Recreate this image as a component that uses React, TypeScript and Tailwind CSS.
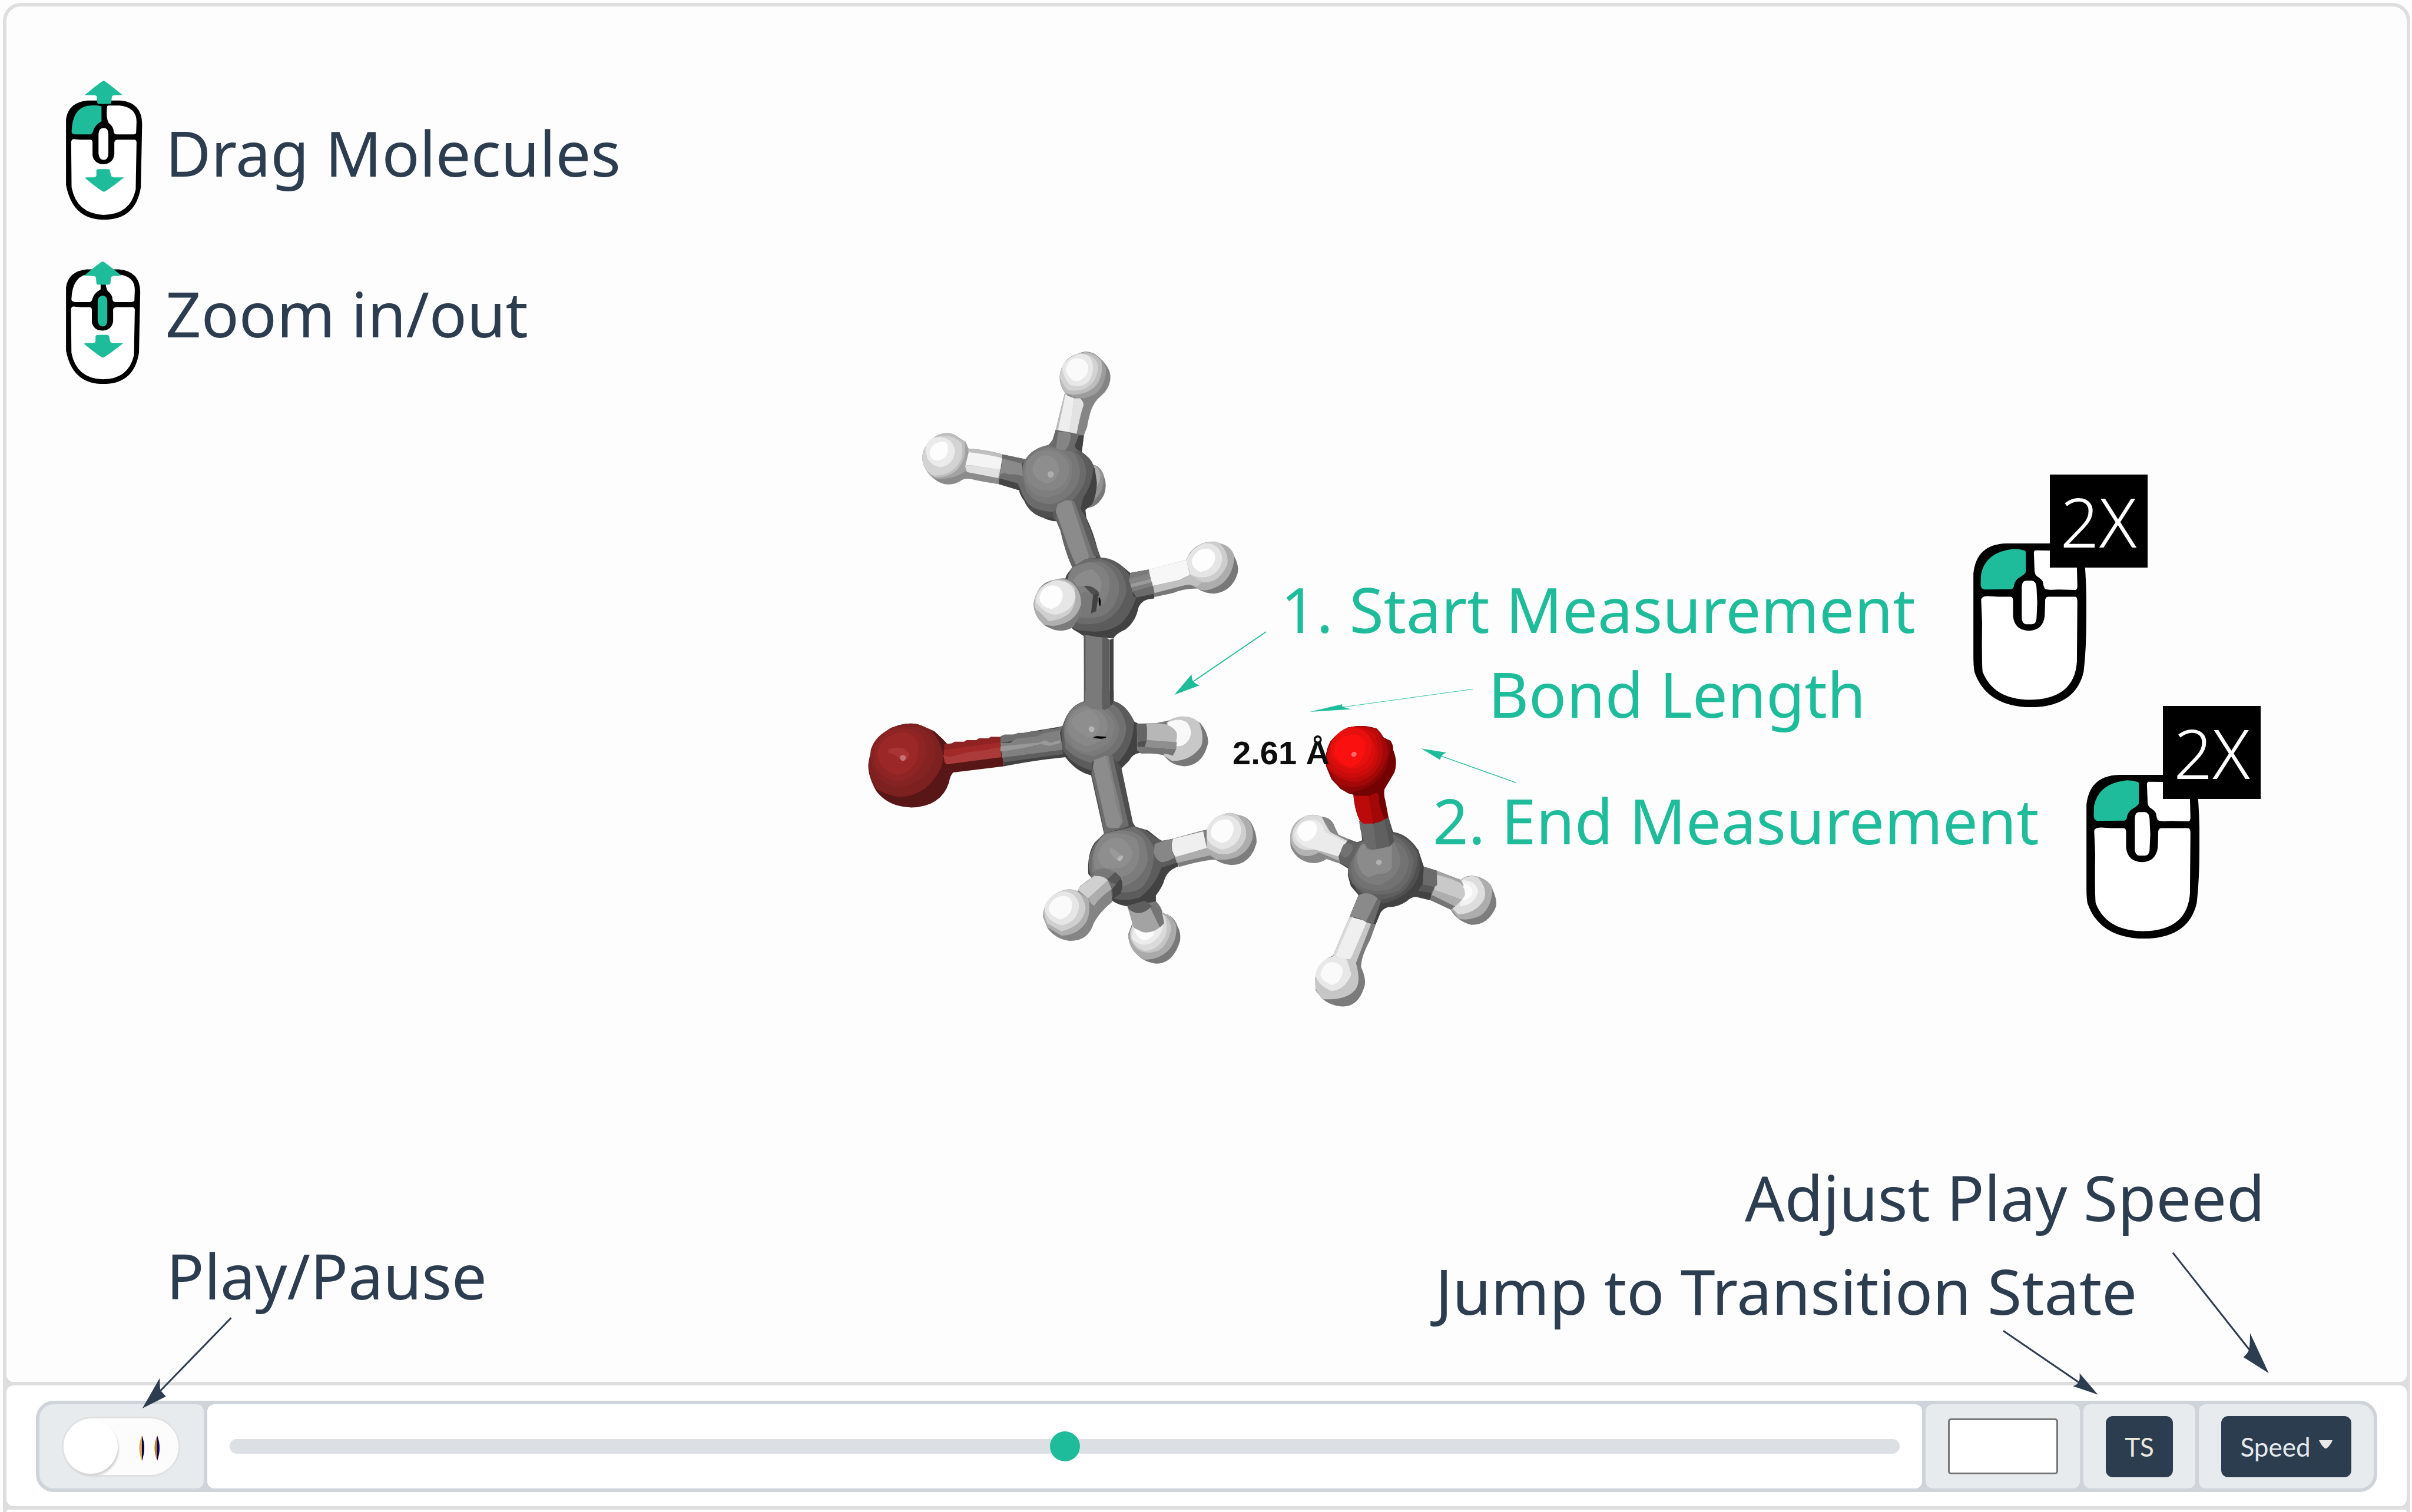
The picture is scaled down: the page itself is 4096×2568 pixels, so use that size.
import React, { useState } from "react";

type Shape = [fill: string, d: string];

const GREEN = "#1fbc9c";
const NAVY = "#2d3d50";

/* Butyl fragment, upper half: CH3 and CH2 groups */
const upperChain: Shape[] = [
  ["#787878", "M950,572 Q985,570 1000,620 Q1015,665 1000,705 Q975,760 930,762 Z"],
  ["#929292", "M950,572 Q985,572 998,615 Q1005,690 958,730 Z"],
  ["#adadad", "M955,572 Q980,580 987,615 Q985,650 972,670Z"],
  ["#424242", "M697,548 Q725,500 785,485 L800,463 L812,418 L922,443 L914,515 Q950,545 965,590 L973,650 Q972,700 955,745 L928,770 L932,805 Q960,870 975,940 L988,980 L877,1022 Q850,960 835,870 L815,820 Q790,820 760,803 Q710,785 690,732 Q672,705 669,683 L590,657 L604,526 Z"],
  ["#858585", "M900,84 Q930,65 965,85 Q990,105 1005,128 Q1030,160 1025,200 Q1020,240 990,268 Q960,295 948,340 Q938,380 935,405 L922,443 L812,418 L830,335 L848,255 Q825,220 828,180 Q835,110 900,84Z"],
  ["#9c9c9c", "M960,85 Q990,105 1008,145 Q1010,220 965,262 Q930,280 907,280 L880,275 L850,252 Q828,220 828,180 Q838,100 900,84 Q930,68 960,85Z"],
  ["#bdbdbd", "M900,84 Q940,66 972,95 L990,112 Q1000,170 975,215 Q945,262 880,264 Q855,262 848,253 Q825,220 829,175 Q838,105 900,84Z"],
  ["#d2d2d2", "M903,84 Q930,82 955,98 Q985,125 975,165 Q965,215 925,238 Q890,250 861,244 Q830,205 829,180 Q838,105 903,84Z"],
  ["#e8e8e8", "M903,84 Q925,82 945,98 Q965,130 955,170 Q945,215 915,223 Q890,232 865,218 Q838,180 838,140 Q850,105 903,84Z"],
  ["#fafafa", "M895,103 Q930,105 939,140 Q942,175 910,200 Q885,212 868,190 Q850,165 852,150 Q862,105 895,103Z"],
  ["#bdbdbd", "M848,255 L858,262 L820,425 L812,418Z"],
  ["#eeeeee", "M850,264 L885,280 L866,430 L820,425Z"],
  ["#e2e2e2", "M885,280 L907,280 Q922,295 921,310 Q908,350 893,440 L864,430Z"],
  ["#8b8b8b", "M345,445 Q390,420 425,445 L460,472 L471,500 Q540,505 604,526 L590,657 Q520,645 480,634 Q455,630 440,643 Q390,675 345,640 Q295,600 291,545 Q290,490 345,445Z"],
  ["#a3a3a3", "M450,470 L460,472 L471,500 L460,600 Q400,645 335,630 Z"],
  ["#bebebe", "M345,445 Q390,420 425,445 L455,470 Q468,540 430,590 Q395,630 340,627 Q295,600 291,540 Q295,480 345,445Z"],
  ["#d3d3d3", "M345,450 Q410,430 445,480 Q455,540 425,580 Q385,625 328,618 Q293,590 291,540 Q300,475 345,450Z"],
  ["#ebebeb", "M350,450 Q410,450 419,510 Q415,570 365,582 Q330,580 312,545 Q300,510 308,480 Q320,455 350,450Z"],
  ["#fdfdfd", "M370,470 Q395,470 391,510 Q390,545 350,553 Q322,550 320,520 Q325,475 370,470Z"],
  ["#bfbfbf", "M471,500 Q530,505 604,526 L602,542 Q530,525 470,516Z"],
  ["#f4f4f4", "M472,516 Q540,525 603,542 L596,592 Q540,588 500,576 L460,574Z"],
  ["#e0e0e0", "M458,574 L500,576 Q550,590 596,590 L588,630 L465,604 Z"],
  ["#6b6b6b", "M604,526 L698,548 L680,567 L603,543Z"],
  ["#5c5c5c", "M785,485 L800,463 L870,440 L888,485 L907,512 Q950,540 960,575 Q955,660 920,715 L910,765 L815,820 L800,805 Q755,790 730,770 Q690,732 680,690 L660,652 L685,566 L697,548 Q725,500 785,485Z"],
  ["#4e4e4e", "M690,732 Q725,780 800,778 L805,805 L760,803 Q710,785 690,732Z"],
  ["#6b6b6b", "M785,485 Q860,480 905,530 Q940,570 927,640 Q905,715 840,760 L800,778 Q740,775 705,745 Q680,710 668,660 L685,566 Q710,500 785,485Z"],
  ["#777777", "M785,485 Q860,490 890,530 Q920,600 895,660 Q865,725 800,745 Q730,745 697,690 L680,620 L686,566 Q715,500 785,485Z"],
  ["#7e7e7e", "M775,495 Q850,500 875,560 Q885,640 840,690 Q790,730 735,705 Q690,670 684,610 Q700,520 775,495Z"],
  ["#858585", "M785,507 Q860,520 866,590 Q860,665 800,685 Q740,690 705,650 Q690,600 697,560 Q720,510 785,507Z"],
  ["#8e8e8e", "M772,530 Q815,530 825,590 Q820,650 775,654 Q725,635 721,590 Q730,535 772,530Z"],
  ["#adadad", "M780,614 Q782,600 793,600 Q805,601 805,614 Q803,628 792,629 Q781,627 780,614Z"],
  ["#8a8a8a", "M603,543 L680,566 L683,622 L596,616Z"],
  ["#6e6e6e", "M596,614 Q610,602 630,615 Q650,610 683,622 Q700,660 665,655 L590,630Z"],
  ["#464646", "M590,632 L660,652 L668,683 L590,657Z"],
  ["#6a6a6a", "M812,418 L870,430 L922,443 L905,512 L850,510 L785,487 L800,463Z"],
  ["#858585", "M822,427 L868,430 Q876,470 850,508 Q830,510 813,498Z"],
  ["#424242", "M902,443 L922,443 L914,515 Q885,505 888,485Z"],
  ["#666666", "M815,820 L830,860 Q850,960 877,1022 L892,1010 Q860,930 835,830 L812,770Z"],
  ["#8b8b8b", "M820,745 L850,728 L875,730 L942,965 Q945,990 925,1000 L892,1014 Q865,950 845,880 L812,775Z"],
  ["#767676", "M872,728 L888,735 L965,965 L975,1000 L930,1000 Q945,985 940,965Z"],
  ["#5c5c5c", "M885,732 Q905,730 910,765 L928,800 L975,940 L985,982 L960,970Z"],
  ["#424242", "M877,1022 L930,985 L995,980 L1045,998 L1075,1020 L1103,1047 L1176,1032 L1198,1152 L1195,1160 Q1150,1160 1135,1200 Q1125,1260 1085,1295 Q1045,1315 1038,1335 L922,1325 L905,1312 L880,1295 L855,1260 L840,1100 L855,1055Z"],
  ["#5c5c5c", "M877,1022 L930,985 L1000,980 Q1040,985 1075,1020 L1103,1060 L1115,1150 L1127,1155 Q1100,1240 1060,1275 Q1010,1310 950,1304 L905,1300 L880,1290 Z"],
  ["#6b6b6b", "M860,1055 L880,1020 L930,985 Q1000,975 1050,1020 Q1090,1070 1088,1130 Q1070,1220 1000,1260 Q950,1278 900,1270 L850,1200Z"],
  ["#777777", "M870,1030 Q940,985 995,1000 Q1060,1040 1060,1120 Q1045,1220 980,1240 Q930,1250 900,1240 L850,1150Z"],
  ["#808080", "M880,1020 L940,1000 Q1020,1010 1023,1090 Q1020,1180 970,1210 L900,1200 L850,1100Z"],
  ["#8b8b8b", "M880,1080 Q910,1035 955,1030 Q985,1060 992,1090 Q990,1150 960,1150 L930,1105 L895,1105Z"],
  ["#787878", "M912,1140 Q925,1120 945,1135 L958,1147 L952,1220 L915,1245 L905,1200Z"],
  ["#4e4e4e", "M922,1105 Q950,1095 980,1130 L980,1150 L958,1145Z"],
  ["#424242", "M958,1145 L980,1135 L970,1215 L950,1225Z"],
  ["#000000", "M980,1155 Q986,1152 988,1172 Q988,1192 985,1194 Q978,1185 980,1155Z"],
  ["#7b7b7b", "M855,1072 L890,1095 L915,1140 L912,1230 L880,1285 Q830,1320 770,1278 Q725,1235 726,1180 Q740,1090 805,1078 Q830,1068 855,1072Z"],
  ["#b0b0b0", "M805,1078 Q840,1065 870,1085 Q912,1120 911,1185 Q890,1270 800,1280 L768,1275 Q722,1235 727,1175 Q745,1100 805,1078Z"],
  ["#cfcfcf", "M805,1080 Q850,1070 885,1110 Q900,1180 865,1225 Q830,1255 785,1259 L745,1215 Q722,1200 733,1150 Q745,1100 805,1080Z"],
  ["#e6e6e6", "M810,1080 Q880,1080 889,1150 Q880,1215 815,1230 Q775,1235 735,1175 Q735,1110 810,1080"],
  ["#fdfdfd", "M795,1102 Q835,1100 840,1145 Q835,1195 795,1205 Q750,1195 749,1155 Q755,1110 795,1102Z"],
  ["#787878", "M1400,912 Q1430,905 1455,918 Q1495,930 1510,975 Q1530,1020 1522,1050 Q1500,1130 1430,1138 Q1390,1135 1365,1115 Q1310,1115 1270,1135 L1198,1153 L1176,1032 L1322,990 Q1340,930 1400,912Z"],
  ["#adadad", "M1395,915 Q1430,903 1455,918 Q1500,930 1510,975 Q1505,1060 1455,1100 Q1400,1135 1370,1118 L1340,1100 L1320,1100 L1320,990 Z"],
  ["#c0c0c0", "M1192,1104 L1295,1078 L1340,1055 L1385,1085 L1365,1105 L1330,1097 L1198,1135Z"],
  ["#cdcdcd", "M1395,915 Q1440,900 1455,920 Q1490,960 1482,1010 Q1450,1095 1385,1088 L1340,1058 L1322,990 Q1345,930 1395,915Z"],
  ["#e5e5e5", "M1395,917 Q1455,915 1463,985 Q1455,1050 1400,1065 Q1370,1070 1338,1054 L1322,990 Q1345,930 1395,917Z"],
  ["#fdfdfd", "M1395,940 Q1435,940 1435,985 Q1425,1035 1375,1042 Q1345,1025 1343,995 Q1355,945 1395,940Z"],
  ["#f7f7f7", "M1174,1032 L1322,990 L1336,1055 L1295,1078 L1190,1104Z"],
  ["#7a7a7a", "M1103,1047 L1176,1032 L1178,1055 L1100,1078Z"],
  ["#858585", "M1098,1075 L1178,1050 L1183,1072 L1103,1095Z"],
  ["#9b9b9b", "M1103,1095 L1183,1072 L1188,1090 L1108,1112Z"],
  ["#7d7d7d", "M1108,1110 L1188,1088 L1192,1106 L1112,1130Z"],
  ["#6b6b6b", "M1112,1128 L1192,1104 L1197,1138 L1127,1155Z"],
  ["#7a7a7a", "M922,1318 L1000,1333 L1000,1655 L922,1655Z"],
  ["#5e5e5e", "M922,1318 L929,1320 L929,1650 L924,1650Z"],
  ["#5e5e5e", "M994,1333 Q1022,1330 1023,1345 L1023,1650 L994,1650Z"],
  ["#424242", "M1023,1340 L1038,1335 L1038,1630 L1023,1645Z"],
];

/* Butyl fragment, lower half: bromine, reacting carbon and CH3 */
const lowerChain: Shape[] = [
  ["#581616", "M160,275 L190,262 Q240,245 275,265 L320,290 L350,325 L368,350 L470,335 L565,317 L578,455 L390,484 Q378,500 375,530 Q345,645 235,648 Q150,645 105,570 Q75,500 76,450 Q85,330 160,275Z"],
  ["#7c2020", "M160,275 L190,262 Q240,245 275,265 L310,285 Q370,380 345,460 Q300,590 195,600 Q140,590 105,560 Q75,500 77,440 Q90,330 160,275Z"],
  ["#852222", "M165,275 Q260,250 300,300 Q345,380 310,455 Q270,550 175,552 Q120,540 95,470 Q80,440 85,380 Q100,310 165,275Z"],
  ["#8e2424", "M150,290 Q240,255 280,320 Q305,400 265,465 Q235,520 180,525 Q120,510 100,450 Q80,350 150,290Z"],
  ["#9b2727", "M200,295 Q255,295 262,370 Q260,480 185,494 Q120,480 108,400 Q120,310 200,295"],
  ["#a93434", "M150,375 Q175,362 210,372 L228,395 Q230,425 200,430 L180,405 L150,390Z"],
  ["#c47272", "M193,414 Q196,400 207,402 Q217,408 215,418 Q210,432 203,430 Q194,426 193,414Z"],
  ["#8f2323", "M357,350 L385,348 L395,340 L430,340 L440,332 L475,332 L485,324 L520,324 L530,316 L565,317 L565,345 L357,378Z"],
  ["#a32828", "M355,378 L565,342 L568,412 L357,440Z"],
  ["#ab3b3b", "M352,402 Q370,415 395,405 Q450,385 520,378 Q550,360 565,370 L568,412 L365,446Z"],
  ["#424242", "M565,317 L790,268 L806,412 Q700,425 578,455Z"],
  ["#5e5e5e", "M572,415 L792,378 L798,398 L576,436Z"],
  ["#6e6e6e", "M565,315 L580,306 L615,306 L630,298 L665,298 L680,290 L715,290 L730,280 L765,280 L800,262 L800,300 L565,345Z"],
  ["#808080", "M565,345 L600,345 L625,325 L700,315 L725,300 L785,285 L795,378 L571,415Z"],
  ["#999999", "M565,362 Q640,350 705,345 L730,333 L750,345 L785,332 L788,345 L745,360 L715,350 Q640,375 565,385Z"],
  ["#424242", "M870,152 L985,150 Q1030,165 1060,245 L1075,255 L1110,258 L1105,390 L1080,392 Q1055,395 1040,430 L1012,465 L1020,520 L900,497 Q845,480 805,412 L785,300 L800,250 Q820,175 870,152Z"],
  ["#5c5c5c", "M870,152 L985,150 Q1030,165 1058,245 Q1060,350 1005,430 L900,475 Q850,455 820,420 L795,380 L790,290 Q810,175 870,152Z"],
  ["#717171", "M870,152 L980,165 Q1020,190 1030,270 Q1030,350 975,405 L905,440 Q840,420 805,370 L797,270 Q820,175 870,152Z"],
  ["#7a7a7a", "M870,154 L960,185 Q1000,220 1005,290 Q990,380 910,408 Q840,400 803,330 Q790,190 870,154"],
  ["#808080", "M870,165 Q970,180 988,260 Q985,370 880,390 Q820,370 806,300 Q800,200 870,165"],
  ["#888888", "M880,175 Q955,190 962,265 Q955,350 880,360 Q815,330 812,270 Q820,190 880,175"],
  ["#8e8e8e", "M895,188 Q930,210 933,260 Q925,320 890,322 Q840,290 826,255 Q835,205 895,188"],
  ["#b5b5b5", "M891,280 Q893,267 902,267 Q913,269 913,281 Q911,294 902,296 Q892,293 891,280Z"],
  ["#000000", "M908,322 Q915,311 930,314 L957,316 Q955,325 935,326Z"],
  ["#7a7a7a", "M879,100 L941,100 L941,188 L900,186 L879,160Z"],
  ["#5e5e5e", "M941,100 L970,100 L970,178 L950,190 L941,185Z"],
  ["#424242", "M970,100 L984,100 L984,152 L972,176Z"],
  ["#787878", "M1190,240 Q1240,205 1285,238 L1303,250 Q1335,300 1333,345 Q1315,450 1245,455 Q1205,450 1185,425 L1168,403 Q1130,392 1085,395 L1070,380 L1070,255 L1140,253 Z"],
  ["#c8c8c8", "M1192,240 Q1240,205 1285,235 L1300,250 Q1320,310 1308,360 Q1270,430 1200,430 L1170,405 L1180,250Z"],
  ["#f8f8f8", "M1185,248 Q1230,225 1255,250 Q1280,290 1262,330 Q1245,365 1215,360 L1180,300Z"],
  ["#b7b7b7", "M1105,256 Q1160,248 1190,265 Q1220,285 1218,310 L1215,345 L1108,332Z"],
  ["#8e8e8e", "M1108,332 L1217,342 L1215,375 L1098,365Z"],
  ["#757575", "M1098,365 L1215,375 L1203,405 Q1170,390 1085,395Z"],
  ["#656565", "M1068,255 L1105,258 Q1112,310 1100,340 L1072,335Z"],
  ["#505050", "M1072,340 L1105,335 L1098,365 L1072,362Z"],
  ["#4e4e4e", "M985,420 L1012,460 L1055,720 L1065,738 L948,770 L900,497 L905,430 Z"],
  ["#6c6c6c", "M980,405 L1040,735 L950,770 Q930,640 902,490 L910,430Z"],
  ["#828282", "M950,405 L965,405 Q985,540 1000,600 L1018,715 L1005,742 L965,745 L935,600 L910,460Z"],
  ["#8c8c8c", "M955,405 L912,425 L908,460 L957,735 Q965,748 1005,742 L1012,715 L990,620 L980,540Z"],
  ["#424242", "M948,770 L1055,735 L1110,755 L1160,805 L1203,795 L1223,925 Q1185,940 1172,985 Q1165,1020 1140,1060 L1140,1088 L1110,1110 L1030,1110 Q1000,1105 978,1085 L890,960 Q885,860 915,810Z"],
  ["#5c5c5c", "M948,770 L1060,735 L1100,755 L1140,790 L1165,805 L1203,795 L1222,905 L1160,930 Q1140,1010 1080,1070 Q1030,1090 985,1075 L900,960 Q885,870 948,770"],
  ["#6e6e6e", "M948,770 L1060,738 Q1120,780 1135,850 Q1130,980 1080,1030 Q1050,1050 1010,1045 L900,975 Q870,860 948,770Z"],
  ["#7c7c7c", "M960,768 Q1040,735 1090,790 Q1110,830 1110,900 Q1090,990 1015,1020 L905,950 Q895,820 960,768Z"],
  ["#868686", "M950,775 Q1030,755 1070,800 Q1085,850 1075,900 Q1060,960 1010,975 L960,930 L915,940 Q895,840 950,775"],
  ["#8e8e8e", "M965,800 Q1010,770 1035,820 L1053,850 Q1055,910 1010,930 L960,935 Q925,920 926,870 Q935,820 965,800Z"],
  ["#999999", "M968,840 Q980,830 1010,870 L1018,885 L1005,900 Q970,880 968,840Z"],
  ["#b5b5b5", "M997,888 Q1000,874 1018,873 Q1020,890 1007,899 Q997,898 997,888Z"],
  ["#777777", "M922,940 Q960,930 990,955 L1012,980 L965,990 L905,968Z"],
  ["#848484", "M912,968 L975,1030 L978,1090 Q930,1140 910,1190 Q890,1275 820,1273 Q770,1265 740,1215 L722,1160 Q725,1070 790,1040 Q815,1025 850,1040 L860,1015Z"],
  ["#afafaf", "M790,1040 Q820,1022 850,1040 L890,1075 Q900,1130 885,1180 Q850,1250 790,1248 L740,1210 L723,1160 Q727,1070 790,1040"],
  ["#cfcfcf", "M790,1040 Q825,1025 850,1042 Q875,1070 880,1120 Q870,1205 790,1228 L738,1190 Q722,1150 730,1110 Q745,1060 790,1040"],
  ["#e6e6e6", "M795,1040 Q850,1045 856,1110 Q850,1185 790,1201 Q735,1180 727,1120 Q740,1060 795,1040"],
  ["#fafafa", "M800,1062 Q832,1065 830,1110 Q825,1160 785,1172 Q745,1155 743,1120 Q755,1065 800,1062"],
  ["#d0d0d0", "M912,968 Q950,968 962,990 L890,1075 L852,1035 Q855,1015 885,995Z"],
  ["#adadad", "M962,990 L977,1030 Q930,1070 912,1108 Q895,1100 890,1072Z"],
  ["#575757", "M990,950 L1010,975 L1005,1010 L975,1000 L960,985Z"],
  ["#454545", "M1010,980 Q1022,1010 1010,1050 L983,1075 L978,1030Z"],
  ["#7d7d7d", "M1390,682 Q1410,665 1440,682 Q1480,690 1495,725 Q1515,775 1512,815 Q1490,915 1420,918 Q1380,912 1360,892 Q1310,895 1225,927 L1200,795 L1315,755 L1330,750 Q1350,690 1390,682Z"],
  ["#adadad", "M1390,682 Q1410,665 1440,682 Q1475,690 1490,720 Q1510,780 1485,830 Q1450,900 1365,892 L1340,872 L1218,908 L1210,880 L1328,838Z"],
  ["#cfcfcf", "M1390,680 Q1415,665 1440,685 Q1480,730 1473,790 Q1445,880 1370,865 L1328,838 L1328,750 Q1350,690 1390,680"],
  ["#e6e6e6", "M1390,684 Q1450,685 1456,755 Q1450,830 1385,845 Q1340,830 1328,790 L1328,750 Q1350,690 1390,684"],
  ["#fcfcfc", "M1400,703 Q1430,710 1427,755 Q1420,805 1385,815 Q1345,800 1342,765 Q1350,705 1400,703"],
  ["#efefef", "M1203,795 L1315,760 L1328,838 L1212,880Q1190,840 1203,795"],
  ["#878787", "M1135,820 Q1170,800 1203,795 Q1190,840 1210,882 Q1180,905 1160,905 Q1135,890 1133,860Z"],
  ["#797979", "M1040,1110 L1140,1088 Q1160,1110 1165,1145 Q1205,1150 1220,1205 Q1232,1230 1230,1270 Q1205,1380 1140,1380 Q1085,1370 1060,1320 Q1035,1280 1038,1240 L1053,1190Z"],
  ["#aaaaaa", "M1165,1142 Q1200,1150 1215,1200 Q1220,1280 1180,1325 Q1145,1365 1095,1360 Q1040,1320 1038,1250 L1055,1190Z"],
  ["#c4c4c4", "M1165,1145 Q1195,1170 1197,1220 Q1180,1300 1150,1318 Q1100,1345 1065,1305 Q1040,1270 1045,1225 L1060,1190Z"],
  ["#dadada", "M1170,1150 Q1188,1200 1175,1250 Q1150,1315 1100,1320 Q1050,1300 1046,1240 L1055,1190"],
  ["#ececec", "M1058,1210 L1165,1200 Q1165,1250 1120,1285 Q1080,1305 1050,1260Z"],
  ["#fcfcfc", "M1060,1215 L1135,1230 Q1130,1260 1095,1272 Q1065,1255 1060,1215Z"],
  ["#a3a3a3", "M1035,1115 L1120,1115 L1158,1205 Q1130,1240 1090,1232 L1058,1212Z"],
  ["#757575", "M1118,1115 L1143,1090 Q1165,1130 1170,1190 L1155,1210Z"],
  ["#5e5e5e", "M1033,1108 L1100,1085 L1125,1110 Q1100,1145 1070,1143 Q1040,1135 1033,1108Z"],
];

/* Methoxide */
const methoxide: Shape[] = [
  ["#888888", "M570,790 Q600,780 630,793 Q670,795 682,830 L697,860 L737,876 L705,968 L650,950 Q620,970 580,963 Q530,950 510,905 Q500,830 570,790"],
  ["#b4b4b4", "M570,790 Q610,782 632,795 Q650,830 665,850 L737,885 L697,955 L620,925 Q575,950 540,930 Q505,900 508,860 Q515,810 570,790"],
  ["#dcdcdc", "M570,790 Q610,782 632,795 Q650,830 665,850 L735,885 L700,935 L600,915 Q540,925 518,880 Q505,830 570,790"],
  ["#ebebeb", "M585,805 Q630,800 645,850 L733,890 L698,941 L610,915 Q535,905 525,860 Q540,810 585,805"],
  ["#fdfdfd", "M580,808 Q615,810 613,840 Q605,882 565,885 Q535,870 536,845 Q545,810 580,808"],
  ["#424242", "M780,808 L892,795 L910,850 Q950,855 980,890 L1008,915 L1030,978 L1080,992 L1057,1103 L1000,1090 Q980,1090 965,1105 Q930,1128 890,1128 Q865,1135 858,1155 L842,1192 L740,1163 L775,1083 L745,1050 L733,1010 L735,985 L705,968 L697,940 L737,876 L770,888 L790,885Z"],
  ["#505050", "M910,850 Q960,855 1000,905 Q1025,950 1010,1010 Q980,1090 870,1115 L800,1090 L775,1083 L735,1000 L735,900 L790,880Z"],
  ["#5e5e5e", "M910,855 Q970,870 1005,930 Q1010,1000 960,1060 Q920,1095 860,1100 L780,1075 L735,1015 L740,920 L790,885Z"],
  ["#696969", "M910,860 Q970,890 990,950 Q990,1020 935,1065 Q880,1090 800,1075 L750,1040 L735,1000 L745,920 L790,885Z"],
  ["#727272", "M910,880 Q965,900 972,960 Q965,1030 900,1060 Q840,1080 780,1050 Q740,1020 747,960 L790,885"],
  ["#7c7c7c", "M912,885 Q940,930 938,960 Q930,1020 860,1045 Q800,1050 765,1000 Q740,950 790,895"],
  ["#8b8b8b", "M790,895 L905,895 L905,980 Q895,1005 850,1005 L815,1018 Q770,1000 769,940 Q775,905 790,895"],
  ["#b0b0b0", "M843,963 Q845,952 855,952 Q867,954 866,962 Q864,972 855,972 Q844,971 843,963Z"],
  ["#626262", "M737,876 L770,888 L790,885 L770,905 L735,980 L705,965 L697,940 Q715,900 737,876"],
  ["#727272", "M718,895 Q750,885 755,905 Q745,940 720,945 Q692,935 718,895"],
  ["#6a6a6a", "M777,808 L834,819 L845,914 L825,916 L808,910 Q785,870 777,808"],
  ["#606060", "M833,819 L858,812 L875,800 L912,885 L898,903 L845,914Z"],
  ["#555555", "M875,800 L892,795 L914,885 L898,903Z"],
  ["#7d7d7d", "M1080,993 L1175,1027 Q1195,1005 1240,1015 Q1290,1030 1300,1065 Q1320,1110 1310,1130 Q1280,1195 1215,1193 Q1160,1180 1135,1137 L1055,1100Z"],
  ["#adadad", "M1185,1020 Q1225,1005 1245,1018 Q1290,1030 1298,1062 Q1295,1130 1250,1160 Q1200,1180 1165,1170 L1135,1135Z"],
  ["#dddddd", "M1185,1020 Q1225,1005 1245,1022 Q1280,1060 1265,1100 Q1235,1150 1165,1155 L1140,1130 L1175,1030"],
  ["#f2f2f2", "M1185,1028 Q1235,1030 1242,1070 Q1230,1120 1170,1125 L1175,1030"],
  ["#fdfdfd", "M1183,1040 Q1220,1045 1220,1075 Q1210,1100 1180,1103Z"],
  ["#a3a3a3", "M1080,993 L1175,1027 L1187,1050 L1082,1010Z"],
  ["#c9c9c9", "M1082,1008 Q1150,1025 1175,1040 Q1195,1065 1190,1085 L1180,1100 L1070,1065 Z"],
  ["#aeaeae", "M1070,1063 L1180,1100 L1152,1125 L1060,1085Z"],
  ["#757575", "M1062,1083 L1152,1125 L1135,1137 L1057,1103Z"],
  ["#6b6b6b", "M1030,978 L1080,993 L1082,1045 L1072,1053 L1025,1045Z"],
  ["#575757", "M1022,1045 L1072,1053 L1060,1075 L1008,1068Z"],
  ["#7b7b7b", "M740,1163 L842,1192 L820,1250 Q785,1310 785,1350 Q810,1400 795,1430 Q770,1500 705,1495 Q660,1490 632,1465 L607,1435 L607,1390 Q615,1330 675,1307 Z"],
  ["#c6c6c6", "M825,1187 L765,1335 Q785,1400 765,1430 Q730,1475 632,1468 L607,1430 L610,1380 L680,1310 L800,1180Z"],
  ["#d9d9d9", "M740,1163 L752,1165 L687,1310 L675,1307Z"],
  ["#efefef", "M750,1165 L808,1180 L745,1318 Q720,1325 685,1308Z"],
  ["#e8e8e8", "M680,1308 L730,1322 L747,1377 Q720,1435 670,1438 Q620,1420 606,1380 Q615,1325 680,1308Z"],
  ["#fafafa", "M670,1331 Q715,1335 713,1370 Q700,1412 670,1416 Q630,1400 626,1378 Q635,1335 670,1331Z"],
  ["#8a8a8a", "M790,1078 Q820,1070 850,1095 L805,1184 Q780,1165 740,1163 L775,1085Z"],
  ["#6a6a6a", "M850,1095 L863,1105 L832,1192 L803,1183Z"],
  ["#730303", "M735,463 Q790,450 845,467 L872,500 L900,512 Q912,530 910,545 Q930,590 915,630 L877,690 Q872,710 880,735 L892,795 L858,812 L780,808 Q760,770 755,712 L735,707 L705,690 L670,655 L650,610 Q640,560 665,515 Q700,475 735,463Z"],
  ["#8a0606", "M735,463 Q790,450 845,467 L872,500 L895,512 Q905,560 880,620 Q840,690 740,705 L705,690 L665,645 L648,605 Q640,560 665,515 Q700,475 735,463Z"],
  ["#a30808", "M735,463 Q800,450 850,470 Q890,510 890,560 Q870,640 800,675 Q740,695 690,670 L650,605 Q645,500 735,463"],
  ["#bb0a0a", "M735,463 Q800,450 850,475 Q880,530 862,590 Q835,650 770,665 Q700,665 660,620 L650,600 Q645,500 735,463"],
  ["#cc0b0b", "M735,463 Q800,455 840,490 Q860,550 845,595 Q810,650 740,650 Q680,640 652,600 Q645,500 735,463"],
  ["#da0d0d", "M735,463 Q830,470 842,550 Q835,620 760,633 Q700,635 662,585 Q650,500 735,463"],
  ["#e80f0f", "M735,463 Q805,460 825,510 Q835,580 780,610 Q720,630 668,570 Q655,495 735,463"],
  ["#fb1010", "M750,489 Q800,490 803,530 Q800,590 750,609 Q700,605 679,560 Q675,500 750,489"],
  ["#ff6b6b", "M747,564 Q748,553 760,553 Q769,555 767,563 Q765,571 756,571 Q747,570 747,564Z"],
  ["#bb0a0a", "M755,715 L815,716 L834,818 L795,819 L780,808 Q760,770 755,715"],
  ["#a30808", "M815,716 L845,704 Q858,710 855,740 Q865,780 878,802 L858,812 L833,818Z"],
];

/* Call-out arrows that belong to the measurement labels */
const measureHeads: Shape[] = [
  [GREEN, "M56,342 L123,267 Q125,290 130,293 Q140,303 155,307Z"],
  [GREEN, "M584,405 L712,377 Q709,381 711,384 Q725,394 755,395Z"],
  [GREEN, "M1020,541 L1119,556 Q1098,562 1093,583Z"],
];

const paint = (shapes: Shape[]) => shapes.map(([fill, d], i) => <path key={i} fill={fill} d={d} />);

function Scene() {
  return (
    <svg className="pointer-events-none absolute inset-0 z-10 size-full" viewBox="0 0 5406 3389" aria-hidden="true">
      <g transform="translate(1900 750) scale(0.574 0.5102)">{paint(upperChain)}</g>
      <g transform="translate(1900 1500) scale(0.6059 0.4783)">{paint(lowerChain)}</g>
      <g transform="translate(2600 1350) scale(0.574 0.6059)">
        {paint(methoxide)}
        {paint(measureHeads)}
        <g stroke={GREEN}>
          <path strokeWidth="4" d="M414,109 L128,294" />
          <path strokeWidth="2" d="M1222,321 L712,388" />
          <path strokeWidth="3" d="M1389,667 L1090,566" />
        </g>
      </g>
      <g stroke={NAVY} strokeWidth="4">
        <path d="M518,2954 L358,3119" />
        <path d="M4870,2808 L5042,3026" />
        <path d="M4490,2983 L4660,3099" />
      </g>
      <g fill={NAVY}>
        <path d="M319,3157 L358,3089 Q358,3112 360,3117 L372,3130Z" />
        <path d="M5085,3078 L5043,2988 Q5043,3018 5040,3027 Q5037,3035 5028,3042Z" />
        <path d="M4702,3126 L4661,3078 Q4662,3092 4659,3098 Q4655,3104 4646,3107Z" />
      </g>
    </svg>
  );
}

function MouseBody({ left, wheel }: { left: string; wheel: string }) {
  return (
    <>
      <path fill="#000" d="M205,232 L282,232 Q333,240 333,330 L330,590 Q318,724 244,724 Q170,724 155,580 L155,310 Q160,240 205,232Z" />
      <path fill="#fff" d="M255,253 L280,253 Q320,260 320,320 L319,365 Q318,372 310,372 L272,372 Q266,370 266,352 Q263,335 255,325 Q248,305 251,258 Q251,253 255,253" />
      <path fill={left} d="M238,256 Q225,250 205,254 Q170,265 168,360 Q168,371 177,372 L212,372 Q217,370 219,355 Q222,335 238,318Z" />
      <path fill="#fff" d="M172,391 L190,394 L212,394 Q217,396 217,405 L217,460 Q222,495 243,495 Q265,492 268,455 L268,405 Q269,395 275,394 L315,394 Q320,396 320,405 L318,600 Q305,704 243,704 Q180,700 168,590 L167,405 Q167,394 172,391" />
      <path fill={wheel} d="M231,370 Q232,345 243,345 Q254,346 254,370 L254,450 Q254,477 243,477 Q232,476 231,450Z" />
    </>
  );
}

const ARROW_UP =
  "M243,150 Q246,150 287,209 L268,210 Q262,211 262,220 L261,240 Q260,247 255,246 L232,246 Q228,245 228,238 L227,218 Q227,210 220,210 L199,209 Q238,152 243,150Z";
const ARROW_DOWN =
  "M226,522 Q226,515 232,515 L253,515 Q258,516 258,522 L260,540 Q261,549 268,549 L291,549 Q249,608 243,609 Q238,608 199,552 Q200,549 205,549 L220,549 Q226,548 226,540Z";

function DragMouse() {
  return (
    <svg className="h-[236px] w-[130px] shrink-0" viewBox="0 0 171 311" aria-hidden="true">
      <g transform="scale(0.9566 0.5421) translate(-155 -150)">
        <MouseBody left={GREEN} wheel="#fff" />
        <path fill={GREEN} d={ARROW_UP} />
        <path fill={GREEN} d={ARROW_DOWN} />
      </g>
    </svg>
  );
}

function ZoomMouse() {
  return (
    <svg className="h-[208px] w-[130px] shrink-0" viewBox="0 0 171 274" aria-hidden="true">
      <g transform="scale(0.9566 0.5421) translate(-155 -896)">
        <g transform="translate(155 929) scale(0.975 0.961) translate(-155 -232)">
          <MouseBody left="#fff" wheel={GREEN} />
        </g>
        <path fill={GREEN} transform="translate(-2 746)" d={ARROW_UP} />
        <path fill={GREEN} transform="translate(-2 684)" d={ARROW_DOWN} />
      </g>
    </svg>
  );
}

function DoubleClick({ className }: { className: string }) {
  return (
    <div className={`absolute h-[395px] w-[296px] ${className}`}>
      <svg className="absolute bottom-0 left-0 h-[278px] w-[192px]" viewBox="0 0 253 367" aria-hidden="true">
        <g transform="scale(0.5421 0.7334) translate(-228 -298)">
          <path fill="#000" d="M365,298 L600,298 Q690,310 691,385 Q697,450 695,530 Q695,620 684,690 Q650,799 460,799 Q280,795 232,690 Q228,670 228,650 L228,390 Q240,300 365,298" />
          <path fill={GREEN} d="M442,320 Q415,314 390,315 Q275,325 259,395 L258,425 Q260,438 275,439 L385,438 Q392,437 395,430 Q397,415 412,405 Q443,392 445,385 L445,325Z" />
          <path fill="#fff" d="M482,319 L590,320 Q650,330 656,372 L658,430 Q657,440 650,440 L580,439 Q535,441 525,437 Q518,433 516,417 Q512,408 490,398 Q482,392 481,383 L478,325Z" />
          <path fill="#fff" d="M260,470 Q262,458 290,459 L330,461 L382,461 Q392,463 392,472 L392,520 Q398,564 458,565 Q515,564 523,520 L525,470 Q527,461 540,461 L650,461 Q658,463 658,475 L656,660 Q645,776 458,776 Q310,774 266,690 Q262,660 264,540Z" />
          <path fill="#fff" d="M428,430 Q430,412 445,412 L470,412 Q487,414 489,432 L492,480 L489,528 Q487,545 470,545 L445,545 Q430,543 428,528Z" />
        </g>
      </svg>
      <span className="absolute top-0 right-0 flex h-[158px] w-[166px] items-center justify-center bg-black text-[116px] leading-none font-[350] text-white">
        2X
      </span>
    </div>
  );
}

function PauseIcon() {
  return (
    <svg className="absolute top-[29px] right-[31px] h-[43px] w-[36px]" viewBox="0 0 36 43" aria-hidden="true">
      <path fill="#e0a04c" d="M5,0 Q-4,21 5,43Z" />
      <path fill="#00004c" d="M5,0 Q13,21 5,43Z" />
      <path fill="#bd7d00" d="M31,0 Q22,21 31,43Z" />
      <path fill="#000080" d="M31,0 Q39,21 31,43Z" />
    </svg>
  );
}

const label = "absolute whitespace-nowrap text-[106px] leading-none";

export default function App() {
  const [playing, setPlaying] = useState(false);
  const [frame, setFrame] = useState(50);

  return (
    <main className="relative flex min-h-screen w-full flex-col bg-[#fdfdfd] pt-[5px] pr-[3px] pl-[5px] font-['Noto_Sans',sans-serif] text-[#2d3d50]">
      <div className="flex flex-1 flex-col rounded-t-[30px] border-[6px] border-b-0 border-[#dedede] bg-[#dedede]">
        <section aria-label="Molecule viewer" className="flex-1 rounded-t-[24px] rounded-b-[12px] bg-[#fdfdfd]">
          <ul className="flex flex-col gap-[71px] pt-[126px] pl-[101px] text-[106px] leading-none">
            <li className="flex gap-[39px]">
              <DragMouse />
              <span className="pt-[69px]">Drag Molecules</span>
            </li>
            <li className="flex gap-[39px]">
              <ZoomMouse />
              <span className="pt-[35px]">Zoom in/out</span>
            </li>
          </ul>

          <p className={`${label} top-[38.2%] left-[53.1%] text-[#1fbc9c]`}>1. Start Measurement</p>
          <p className={`${label} top-[43.8%] left-[61.7%] text-[#1fbc9c]`}>Bond Length</p>
          <p className={`${label} top-[52.2%] left-[59.4%] text-[#1fbc9c]`}>2. End Measurement</p>
          <p className={`${label} top-[82.3%] left-[6.9%]`}>Play/Pause</p>
          <p className={`${label} top-[77.1%] right-[6.1%]`}>Adjust Play Speed</p>
          <p className={`${label} top-[83.3%] right-[11.4%]`}>Jump to Transition State</p>
          <p className="absolute top-[48.7%] left-[51.1%] z-20 font-['Liberation_Sans',sans-serif] text-[56px] leading-none font-bold whitespace-nowrap text-[#0d0d0d]">
            2.61 Å
          </p>

          <DoubleClick className="top-[31.4%] left-[81.8%]" />
          <DoubleClick className="top-[46.7%] left-[86.5%]" />
        </section>

        <footer className="mt-[6px] rounded-[12px] bg-white px-[50px] pt-[26px] pb-[24px]">
          <div className="flex h-[155px] gap-[6px] rounded-[30px] bg-[#cfd3da] p-[6px]">
            <div className="flex w-[279px] items-center rounded-[12px] rounded-l-[24px] bg-[#e7ebee] pl-[38px]">
              <button
                type="button"
                role="switch"
                aria-checked={playing}
                aria-label="Play or pause"
                onClick={() => setPlaying(!playing)}
                className="relative h-[102px] w-[201px] rounded-full border-[3px] border-[#e1e1e1] bg-[#fcfcfc]"
              >
                <span className="absolute top-[2px] left-0 size-[92px] rounded-full bg-white shadow-[2px_4px_3px_0_#d4d6d4]" />
                <PauseIcon />
              </button>
            </div>

            <div className="flex flex-1 items-center rounded-[12px] bg-white px-[38px]">
              <input
                type="range"
                aria-label="Frame"
                min={0}
                max={100}
                value={frame}
                onChange={(e) => setFrame(Number(e.target.value))}
                className="h-[25px] w-full appearance-none rounded-full bg-[#dcdfe4] [&::-webkit-slider-thumb]:size-[51px] [&::-webkit-slider-thumb]:appearance-none [&::-webkit-slider-thumb]:rounded-full [&::-webkit-slider-thumb]:bg-[#1fbc9c]"
              />
            </div>

            <div className="flex w-[262px] items-center justify-center rounded-[12px] bg-[#e7ebee]">
              <input
                type="text"
                aria-label="Frame number"
                className="h-[95px] w-[187px] rounded-[5px] border-[3px] border-[#777777] bg-white px-4 text-[42px]"
              />
            </div>

            <div className="flex w-[190px] items-center justify-center rounded-[12px] bg-[#e7ebee]">
              <button
                type="button"
                className="h-[104px] w-[114px] rounded-[12px] bg-[#2d3d50] font-['Lato',sans-serif] text-[44px] leading-none text-[#ebe8dc]"
              >
                TS
              </button>
            </div>

            <div className="flex w-[297px] items-center justify-center rounded-[12px] rounded-r-[24px] bg-[#e7ebee]">
              <button
                type="button"
                aria-haspopup="menu"
                className="flex h-[104px] w-[221px] items-center justify-center gap-[14px] rounded-[12px] bg-[#2d3d50] font-['Lato',sans-serif] text-[44px] leading-none text-[#e6eaee]"
              >
                Speed
                <svg className="mb-2 h-[14px] w-[23px]" viewBox="0 0 23 14" aria-hidden="true">
                  <path fill="#e8e8e8" d="M0,0 Q11,-1 23,0 Q20,8 13,14 L10,14 Q4,9 0,0Z" />
                </svg>
              </button>
            </div>
          </div>
        </footer>
        <div className="mt-[6px] h-1 rounded-t-[4px] bg-white" />
      </div>
      <Scene />
    </main>
  );
}
